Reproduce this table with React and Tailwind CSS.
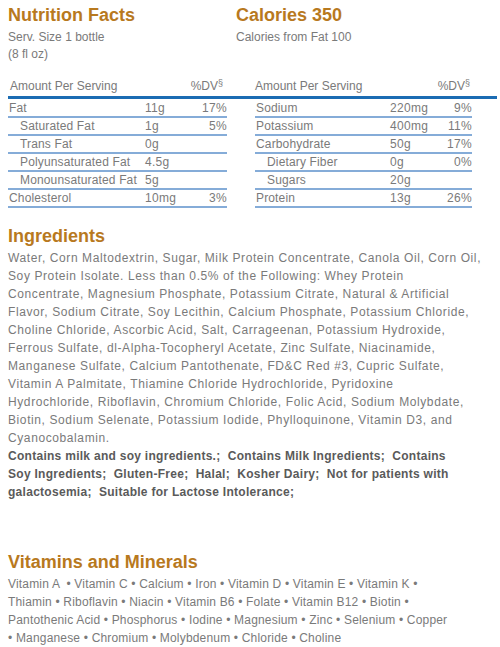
import React from "react"

const left = [
  { name: "Fat", amt: "11g", dv: "17%" },
  { name: "Saturated Fat", amt: "1g", dv: "5%", sub: true },
  { name: "Trans Fat", amt: "0g", dv: "", sub: true },
  { name: "Polyunsaturated Fat", amt: "4.5g", dv: "", sub: true },
  { name: "Monounsaturated Fat", amt: "5g", dv: "", sub: true },
  { name: "Cholesterol", amt: "10mg", dv: "3%" },
]

const right = [
  { name: "Sodium", amt: "220mg", dv: "9%" },
  { name: "Potassium", amt: "400mg", dv: "11%" },
  { name: "Carbohydrate", amt: "50g", dv: "17%" },
  { name: "Dietary Fiber", amt: "0g", dv: "0%", sub: true },
  { name: "Sugars", amt: "20g", dv: "", sub: true },
  { name: "Protein", amt: "13g", dv: "26%" },
]

const ingredients = [
  "Water, Corn Maltodextrin, Sugar, Milk Protein Concentrate, Canola Oil, Corn Oil,",
  "Soy Protein Isolate. Less than 0.5% of the Following: Whey Protein",
  "Concentrate, Magnesium Phosphate, Potassium Citrate, Natural & Artificial",
  "Flavor, Sodium Citrate, Soy Lecithin, Calcium Phosphate, Potassium Chloride,",
  "Choline Chloride, Ascorbic Acid, Salt, Carrageenan, Potassium Hydroxide,",
  "Ferrous Sulfate, dl-Alpha-Tocopheryl Acetate, Zinc Sulfate, Niacinamide,",
  "Manganese Sulfate, Calcium Pantothenate, FD&C Red #3, Cupric Sulfate,",
  "Vitamin A Palmitate, Thiamine Chloride Hydrochloride, Pyridoxine",
  "Hydrochloride, Riboflavin, Chromium Chloride, Folic Acid, Sodium Molybdate,",
  "Biotin, Sodium Selenate, Potassium Iodide, Phylloquinone, Vitamin D3, and",
  "Cyanocobalamin.",
]

const claims = [
  "Contains milk and soy ingredients.;  Contains Milk Ingredients;  Contains",
  "Soy Ingredients;  Gluten-Free;  Halal;  Kosher Dairy;  Not for patients with",
  "galactosemia;  Suitable for Lactose Intolerance;",
]

const vitamins = [
  "Vitamin A  \u2022 Vitamin C \u2022 Calcium \u2022 Iron \u2022 Vitamin D \u2022 Vitamin E \u2022 Vitamin K \u2022",
  "Thiamin \u2022 Riboflavin \u2022 Niacin \u2022 Vitamin B6 \u2022 Folate \u2022 Vitamin B12 \u2022 Biotin \u2022",
  "Pantothenic Acid \u2022 Phosphorus \u2022 Iodine \u2022 Magnesium \u2022 Zinc \u2022 Selenium \u2022 Copper",
  "\u2022 Manganese \u2022 Chromium \u2022 Molybdenum \u2022 Chloride \u2022 Choline",
]

function NutrientTable({ rows, nameW, padL }) {
  return (
    <div className={padL}>
      {rows.map((r) => (
        <div key={r.name} className="flex items-center h-[18px] border-b-2 border-[#85acd8]">
          <div className={nameW + " tracking-[0.15px] " + (r.sub ? "pl-3" : "pl-[1px]")}>{r.name}</div>
          <div className="w-[50px] tracking-[0.3px]">{r.amt}</div>
          <div className="w-[32px] text-right tracking-[0.3px]">{r.dv}</div>
        </div>
      ))}
    </div>
  )
}

export default function App() {
  return (
    <div className="w-[500px] px-2 pt-[4px] text-[12px] leading-[18px] text-[#7a7a7a]" style={{ fontFamily: '"Liberation Sans", Arial, sans-serif' }}>
      <div className="flex">
        <div className="w-[228px]">
          <h1 className="text-[18px] leading-[22px] font-bold text-[#b8791e]">Nutrition Facts</h1>
          <p className="leading-[17px] mt-[3px]">Serv. Size 1 bottle</p>
          <p className="leading-[17px]">(8 fl oz)</p>
        </div>
        <div>
          <h1 className="text-[18px] leading-[22px] font-bold text-[#b8791e]">Calories 350</h1>
          <p className="leading-[17px] mt-[3px]">Calories from Fat 100</p>
        </div>
      </div>

      <div className="mt-[14px] w-[489px]">
        <div className="flex border-b-[3px] border-[#1b6cb3] pb-[1px]">
          <div className="w-[244px] flex">
            <div className="w-[177px] pl-[2px]">Amount Per Serving</div>
            <div className="w-[38px] text-right">%DV<sup className="text-[9px]">§</sup></div>
          </div>
          <div className="flex pl-[3px]">
            <div className="w-[180px]">Amount Per Serving</div>
            <div className="w-[35px] text-right">%DV<sup className="text-[9px]">§</sup></div>
          </div>
        </div>
        <div className="flex pt-[1px]">
          <div className="w-[244px]">
            <NutrientTable rows={left} nameW="w-[137px]" padL="pr-[25px]" />
          </div>
          <div className="w-[245px]">
            <NutrientTable rows={right} nameW="w-[135px]" padL="pl-[3px] pr-[25px]" />
          </div>
        </div>
      </div>

      <h2 className="mt-[17px] text-[18px] leading-[22px] font-bold text-[#b8791e]">Ingredients</h2>
      <div className="mt-[2px] tracking-[0.6px] whitespace-pre">
        {ingredients.map((l) => (
          <div key={l}>{l}</div>
        ))}
      </div>
      <div className="font-bold text-[#5a5a5a] tracking-[0.28px] whitespace-pre">
        {claims.map((l) => (
          <div key={l}>{l}</div>
        ))}
      </div>

      <h2 className="mt-[50px] text-[18px] leading-[22px] font-bold text-[#b8791e]">Vitamins and Minerals</h2>
      <div className="mt-[2px] tracking-[0.18px] whitespace-pre">
        {vitamins.map((l) => (
          <div key={l}>{l}</div>
        ))}
      </div>
    </div>
  )
}
